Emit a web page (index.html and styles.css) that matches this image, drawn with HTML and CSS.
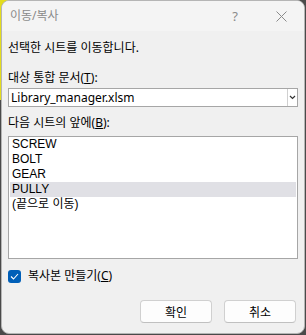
FILE: index.html
```html
<!DOCTYPE html>
<html lang="ko">
<head>
    <meta charset="UTF-8">
    <title>이동/복사</title>
    <link rel="stylesheet" href="styles.css">
</head>
<body>
    <div class="dialog">
        <div class="titlebar">
            <span class="title">이동/복사</span>
            <span class="help">?</span>
            <span class="close">
                <svg width="11" height="11" viewBox="0 0 11 11"><path d="M0.5 0.5 L10.5 10.5 M10.5 0.5 L0.5 10.5" stroke="#8a8a8a" stroke-width="1" fill="none"/></svg>
            </span>
        </div>
        <div class="content">
            <p class="intro">선택한 시트를 이동합니다.</p>
            <label class="field-label">대상 통합 문서(<u>T</u>):</label>
            <div class="combo">
                <span class="combo-value">Library_manager.xlsm</span>
                <span class="combo-arrow">
                    <svg width="7" height="5" viewBox="0 0 7 5"><path d="M1 1 L3.5 3.5 L6 1" stroke="#333" stroke-width="1.2" fill="none"/></svg>
                </span>
            </div>
            <label class="field-label second">다음 시트의 앞에(<u>B</u>):</label>
            <ul class="sheet-list">
                <li>SCREW</li>
                <li>BOLT</li>
                <li>GEAR</li>
                <li class="selected">PULLY</li>
                <li>(끝으로 이동)</li>
            </ul>
            <div class="check-row">
                <span class="checkbox">
                    <svg width="9" height="7" viewBox="0 0 9 7"><path d="M1 3.5 L3.5 6 L8 1" stroke="#fff" stroke-width="1.1" fill="none"/></svg>
                </span>
                <span>복사본 만들기(<u>C</u>)</span>
            </div>
            <div class="buttons">
                <button type="button" class="btn">확인</button>
                <button type="button" class="btn">취소</button>
            </div>
        </div>
    </div>
</body>
</html>
```

FILE: styles.css
```css
body {
    margin: 0;
    padding: 0 1px 1px 1px;
    background-color: #4a4a4a;
    background-image: linear-gradient(#e3dc1e, #e3dc1e);
    background-repeat: no-repeat;
    background-size: 230px 100px;
    font-family: "Noto Sans", "Noto Sans CJK KR", sans-serif;
    font-size: 12px;
    color: #000;
}
.dialog {
    width: 304px;
    box-sizing: border-box;
    border: 1px solid #b5b5b5;
    border-radius: 8px;
    overflow: hidden;
    background-color: #f0f0f0;
}
.titlebar {
    height: 30px;
    display: flex;
    align-items: center;
    padding-left: 8px;
    background-color: #f4f4f4;
}
.title {
    flex: 1;
    color: #8a8a8a;
    line-height: 16px;
}
.help {
    width: 46px;
    text-align: center;
    color: #8a8a8a;
    font-size: 13px;
}
.close {
    width: 46px;
    display: flex;
    justify-content: center;
}
.content {
    padding: 9px 6px 10px 6px;
}
.intro {
    margin: 0;
    line-height: 16px;
}
.field-label {
    display: block;
    margin-top: 14px;
    line-height: 16px;
}
.field-label.second {
    margin-top: 8px;
}
.combo {
    margin-top: 2px;
    height: 19px;
    box-sizing: border-box;
    border: 1px solid #a6a6a6;
    background-color: #fff;
    display: flex;
    align-items: stretch;
}
.combo-value {
    flex: 1;
    padding-left: 2px;
    line-height: 17px;
}
.combo-arrow {
    width: 9px;
    border-left: 1px solid #d0d0d0;
    display: flex;
    align-items: center;
    justify-content: center;
}
.sheet-list {
    list-style: none;
    margin: 5px 0 0 0;
    padding: 0;
    height: 123px;
    box-sizing: border-box;
    border: 1px solid #a6a6a6;
    background-color: #fff;
    font-family: "Liberation Sans", "Noto Sans CJK KR", sans-serif;
}
.sheet-list li {
    height: 15px;
    line-height: 15px;
    margin: 0 1px;
    padding-left: 2px;
}
.sheet-list li.selected {
    background-color: #e0e0e5;
}
.check-row {
    margin-top: 9px;
    height: 16px;
    display: flex;
    align-items: center;
    gap: 7px;
    line-height: 16px;
}
.checkbox {
    width: 13px;
    height: 13px;
    border-radius: 3px;
    background-color: #005fb8;
    display: flex;
    align-items: center;
    justify-content: center;
}
.buttons {
    margin-top: 16px;
    display: flex;
    justify-content: flex-end;
    gap: 12px;
    padding-right: 2px;
}
.btn {
    width: 72px;
    height: 23px;
    box-sizing: border-box;
    border: 1px solid #d0d0d0;
    border-bottom-color: #c0c0c0;
    border-radius: 4px;
    background-color: #fdfdfd;
    font-family: "Noto Sans", "Noto Sans CJK KR", sans-serif;
    font-size: 12px;
    color: #000;
    padding: 0;
}
```
